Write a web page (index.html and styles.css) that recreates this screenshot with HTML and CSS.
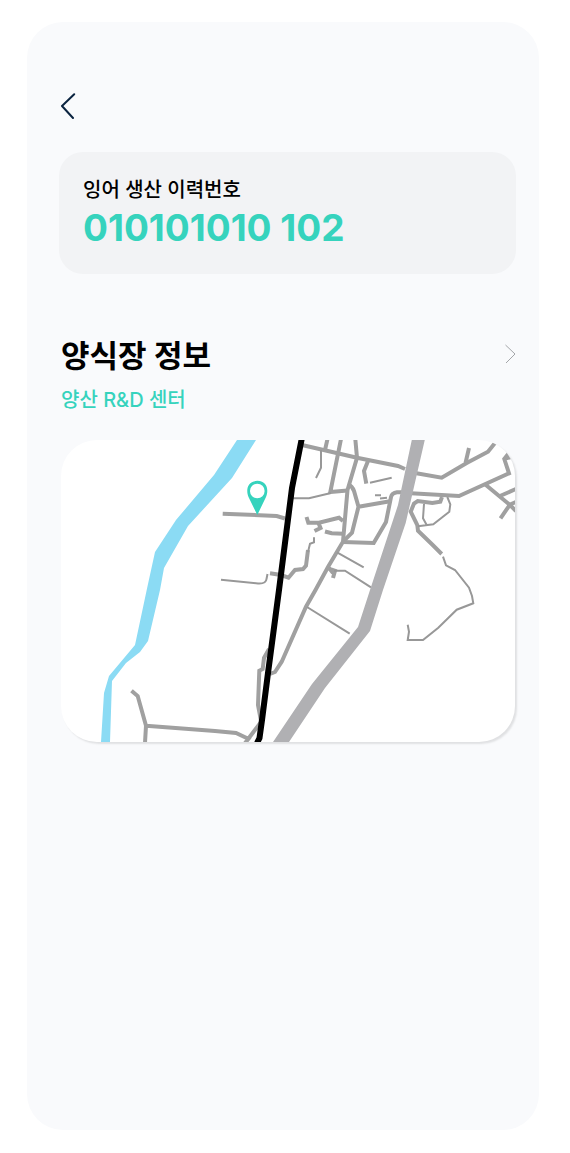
FILE: index.html
```html
<!DOCTYPE html>
<html lang="ko">
<head>
<meta charset="utf-8">
<meta name="viewport" content="width=device-width, initial-scale=1">
<title>양식장 정보</title>
<link rel="stylesheet" href="styles.css">
</head>
<body>
<main class="screen">
  <button class="back" type="button" aria-label="뒤로">
    <svg width="18" height="26" viewBox="0 0 18 26" aria-hidden="true"><path d="M15.200 1.200L3 13L14 25"/></svg>
  </button>

  <section class="history">
    <p class="history-label">잉어 생산 이력번호</p>
    <p class="history-number">010101010 102</p>
  </section>

  <section class="farm">
    <header class="farm-head">
      <h1 class="farm-title">양식장 정보</h1>
      <a class="more" href="#farm" aria-label="양식장 정보 자세히 보기">
        <svg width="12" height="20" viewBox="0 0 12 20" aria-hidden="true"><path d="M1.500 1L11 10L2 19"/></svg>
      </a>
    </header>
    <p class="farm-name">양산 R&amp;D 센터</p>
    <div class="map" id="farm">
      <svg class="map-drawing" viewBox="61 440 454 302" role="img" aria-label="양산 R&amp;D 센터 지도">
        <path class="river" d="M237 440L214 475L176 520L155 552L146.700 590L135 645L109 676L104 693L101 742H110L112 681L126 663L140 652L148 641L160 590L164 568L188 526L232 478L256 440Z"/>
        <g class="road">
          <path d="M302 445L357 457.700L398 466L405 469M415 473L441.700 477.700L466.700 463L488 451.700L495 443M465.500 463L469 448"/>
          <path d="M327.500 439L325 450M341 439L330.300 492L347.500 490.500"/>
          <path d="M355.300 439L357 457.700L347.500 490L343 541.700L328 567L315.500 590L306 606.700L281.700 661.700L275 672L270 674"/>
          <path d="M368 461L364 471L366.300 483.700M349 485Q352 486 354 491L358.500 506.700L352 532.700L343 541.700M358.500 506.700L390 501.300"/>
          <path d="M402 492.300H397Q392 493 391 497L386 522L373.700 543L343 542"/>
          <path d="M306.500 517L308.300 522.700H319L339 517.700L343 521M318.500 523L320.500 528L314.500 531M325 531.500L331.700 533.300L343 533.700"/>
          <path d="M308 550L306 565.700L303 569L295 570L288.500 577.700L281 575L270 573.300M328 568.300L335 570.700L333 578M329 568L333 573"/>
          <path d="M222.700 513.700L276.700 516L285 518.500"/>
          <path d="M411 493.300L459 496L509 473.300L504.300 459L509 453M504 459L511 457M485 484.300L510 505L516 511M500 496L516 489M500.500 518.300L510 504.500L516 502"/>
          <path d="M442 497L440.300 501.700L432.300 503L417.700 501L414 503.500L410.700 511.700L417.300 525L418 530.700L432.700 545L441.700 554"/>
          <path d="M131.500 690.700L137.700 696L146 725.700L145 743M146 725.700L215 731L236 733L248.300 738.700L261 722M250 737L245 743"/>
          <path d="M269 649L264 658L262.700 669L259.300 670.700L258 705L261 721"/>
        </g>
        <g class="lane">
          <path d="M321 450V467.700L316 478M292 498.300H309L331 493M370 482.700L391.700 477.700M375 495.300H381M380 498.500L387 497.700"/>
          <path d="M314 537.300V542.300L310 543.700L308 552M337 552.300L363.700 567.300M334 570.700H345L371 587.300M307 607L349.700 633.700"/>
          <path d="M221 579.700L258 583.500Q266 584 266.500 579L267.500 574"/>
          <path d="M447.300 497L450.300 504.300L449.300 511.700L433.300 524.300L418 526.300M424 504L423 518.300L426.700 525"/>
          <path d="M443 556.700L446 565.300L455 570L469 587.700L472 596L473.300 603.300L456.700 609.700L438.300 627.700L423 640H407.700L409 631.700L407.700 624.700"/>
        </g>
        <path class="highway" d="M412 439L398 505L370 590L358 627L312 684L273 742H289L325 688L370 631L383 590L405.700 523L425 439Z"/>
        <path class="railway" d="M301.700 439L292 488L279 590L268 673L262 720L259.500 738L257 743"/>
        <path class="pin" fill-rule="evenodd" d="M257.300 515L248.500 497C246 491 246.500 481 257.300 480.800C268 481 268.600 491 266 497ZM257.300 483.700A7.300 7.300 0 1 0 257.300 498.300A7.300 7.300 0 1 0 257.300 483.700Z"/>
      </svg>
    </div>
  </section>
</main>
</body>
</html>
```
FILE: styles.css
```css
* {
  box-sizing: border-box;
}

body {
  margin: 0;
  padding: 22px 31px 23px 27px;
  min-height: 100vh;
  display: flex;
  background: #fff;
  color: #000;
  font-family: Inter, "Noto Sans CJK KR", sans-serif;
}

h1,
p {
  margin: 0;
}

.screen {
  flex: 1;
  min-width: 0;
  padding: 68px 23px 32px 32px;
  border-radius: 36px;
  background: #f9fafc;
}

.back {
  display: flex;
  padding: 3px 0;
  border: 0;
  background: none;
  cursor: pointer;
}

.back svg {
  fill: none;
  stroke: #0b2440;
  stroke-width: 2;
  stroke-linecap: round;
  stroke-linejoin: round;
}

.history {
  margin-top: 30px;
  padding: 24px;
  border-radius: 24px;
  background: #f2f3f5;
}

.history-label {
  font-size: 20px;
  line-height: 28px;
  font-weight: 500;
}

.history-number {
  margin-top: 2px;
  font-size: 37px;
  line-height: 44px;
  font-weight: 700;
  color: #36d3bd;
}

.farm {
  margin-top: 62px;
  padding-left: 2px;
}

.farm-head {
  display: flex;
  align-items: center;
  justify-content: space-between;
}

.farm-title {
  font-size: 31px;
  line-height: 40px;
  font-weight: 700;
}

.more {
  display: flex;
  padding-bottom: 4px;
}

.more svg {
  fill: none;
  stroke: #a3a5a8;
  stroke-width: 1;
}

.farm-name {
  margin-top: 10px;
  font-size: 20px;
  line-height: 28px;
  font-weight: 500;
  color: #36d3bd;
}

.map {
  margin: 26px 1px 0 0;
  border-radius: 36px;
  overflow: hidden;
  background: #fff;
  box-shadow: 2px 2px 2px rgba(0, 0, 0, 0.1);
}

.map-drawing {
  display: block;
  width: 100%;
}

.river {
  fill: #8bdbf4;
}

.road {
  fill: none;
  stroke: #a0a0a0;
  stroke-width: 4;
}

.lane {
  fill: none;
  stroke: #989898;
  stroke-width: 2;
}

.highway {
  fill: #b0b0b3;
}

.railway {
  fill: none;
  stroke: #000;
  stroke-width: 6;
}

.pin {
  fill: #36d3bd;
}
```
